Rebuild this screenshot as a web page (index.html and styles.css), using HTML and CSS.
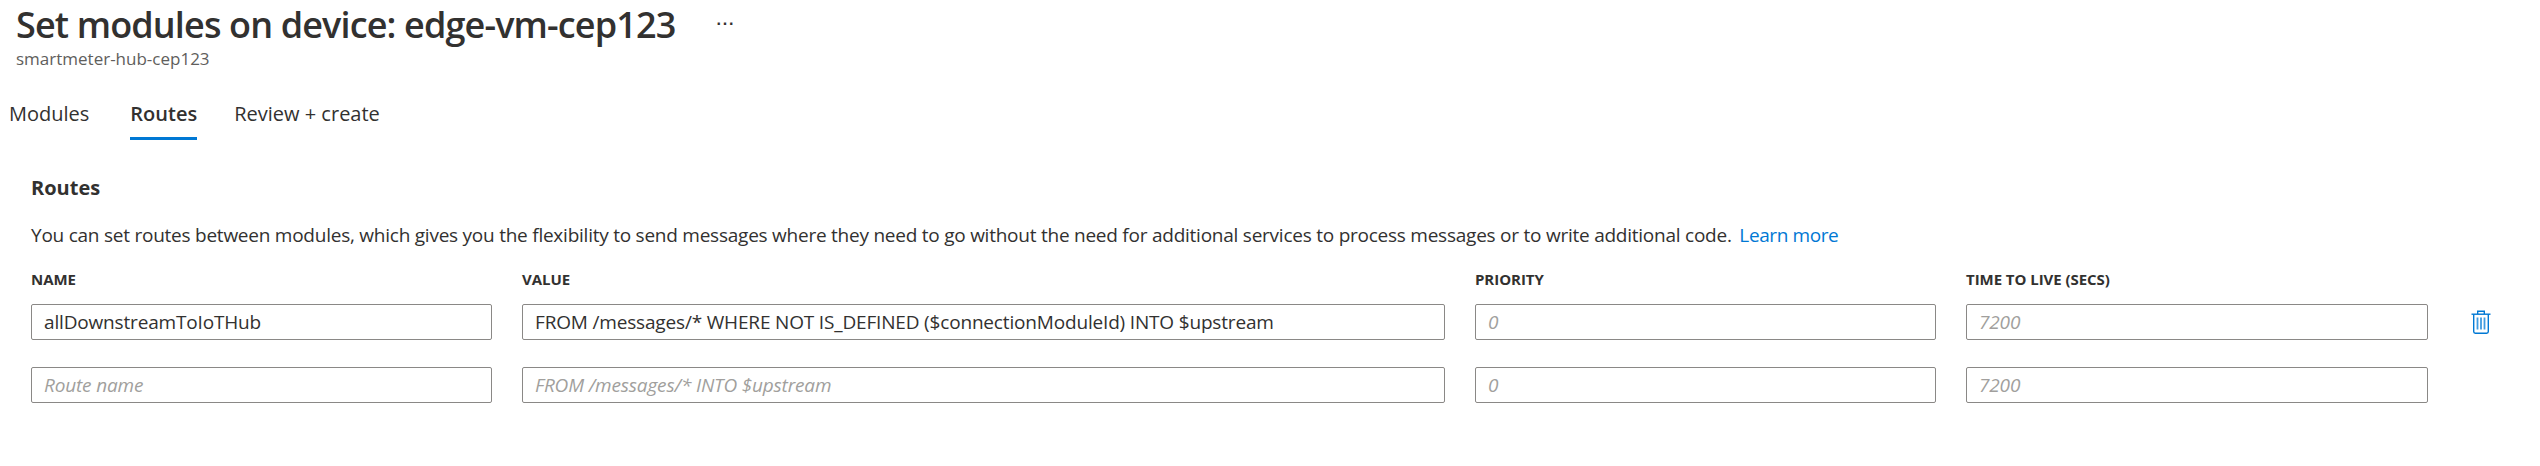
FILE: index.html
```html
<!DOCTYPE html>
<html>
<head>
  <title>Set modules on device</title>
  <link rel="stylesheet" href="styles.css">
</head>
<body>
  <header class="page-head">
    <div class="title-row">
      <h1>Set modules on device: edge-vm-cep123</h1>
      <button class="more">&middot;&middot;&middot;</button>
    </div>
    <div class="subtitle">smartmeter-hub-cep123</div>
  </header>

  <nav class="tabs">
    <a class="tab">Modules</a>
    <a class="tab active">Routes</a>
    <a class="tab">Review + create</a>
  </nav>

  <section class="routes">
    <h2>Routes</h2>
    <p class="desc">You can set routes between modules, which gives you the flexibility to send messages where they need to go without the need for additional services to process messages or to write additional code. <a class="learn">Learn more</a></p>

    <div class="route-grid">
      <label>Name</label>
      <label>Value</label>
      <label>Priority</label>
      <label>Time to live (secs)</label>
      <span></span>

      <input type="text" value="allDownstreamToIoTHub">
      <input type="text" value="FROM /messages/* WHERE NOT IS_DEFINED ($connectionModuleId) INTO $upstream">
      <input type="text" placeholder="0">
      <input type="text" placeholder="7200">
      <button class="trash" aria-label="Delete route">
        <svg width="20" height="24" viewBox="0 0 20 24" fill="none" stroke="#0078d4" stroke-width="1.4">
          <path d="M0.5 4.2H19.5"/>
          <path d="M6.7 4V1.2H13.3V4"/>
          <path d="M2.7 4.2V21.6Q2.7 23.2 4.3 23.2H15.7Q17.3 23.2 17.3 21.6V4.2"/>
          <path d="M6.5 7.5V19.5M10 7.5V19.5M13.5 7.5V19.5" stroke-width="1.8" stroke="#3f9be0"/>
        </svg>
      </button>

      <input type="text" placeholder="Route name">
      <input type="text" placeholder="FROM /messages/* INTO $upstream">
      <input type="text" placeholder="0">
      <input type="text" placeholder="7200">
      <span></span>
    </div>
  </section>
</body>
</html>
```

FILE: styles.css
```css
body {
  font-family: "Open Sans", "Noto Sans", sans-serif;
  margin: 0;
  background-color: #fff;
  color: #323130;
}

.page-head {
  padding: 3px 0 0 16px;
}

.title-row {
  display: flex;
  align-items: center;
  height: 42px;
}

h1 {
  margin: 0;
  font-size: 36px;
  font-weight: 600;
  letter-spacing: -0.86px;
  white-space: nowrap;
}

.more {
  margin-left: 41px;
  padding: 0;
  border: none;
  background: none;
  font-size: 16px;
  font-weight: 700;
  letter-spacing: 1px;
  color: #323130;
}

.subtitle {
  margin-top: 4px;
  font-size: 17px;
  line-height: 20px;
  color: #605e5c;
}

.tabs {
  display: flex;
  gap: 37px;
  margin-top: 25px;
  padding-left: 9px;
}

.tab {
  height: 43px;
  line-height: 40px;
  font-size: 20px;
  border-bottom: 3px solid transparent;
  color: #323130;
}

.tab:first-child {
  margin-right: 4px;
}

.tab.active {
  font-weight: 600;
  border-bottom-color: #0078d4;
}

.routes {
  padding: 35px 0 0 31px;
}

h2 {
  margin: 0;
  font-size: 20px;
  line-height: 26px;
  font-weight: 700;
}

.desc {
  margin: 22px 0 0;
  font-size: 19px;
  line-height: 24px;
  letter-spacing: -0.24px;
  white-space: nowrap;
}

.learn {
  margin-left: 3px;
  letter-spacing: -0.4px;
  color: #0078d4;
}

.route-grid {
  display: grid;
  grid-template-columns: 461px 923px 461px 462px 60px;
  column-gap: 30px;
  row-gap: 27px;
  align-items: center;
  margin-top: 22px;
}

label {
  font-size: 15px;
  line-height: 20px;
  font-weight: 700;
  text-transform: uppercase;
  letter-spacing: -0.05px;
  margin-bottom: -12px;
}

input {
  box-sizing: border-box;
  width: 100%;
  height: 36px;
  padding: 0 12px;
  border: 1px solid #8a8886;
  border-radius: 2px;
  font-family: inherit;
  font-size: 19px;
  letter-spacing: -0.17px;
  color: #323130;
  outline: none;
}

input::placeholder {
  font-style: italic;
  color: #a19f9d;
}

.trash {
  width: 20px;
  height: 24px;
  margin-left: 13px;
  padding: 0;
  border: none;
  background: none;
}
```
